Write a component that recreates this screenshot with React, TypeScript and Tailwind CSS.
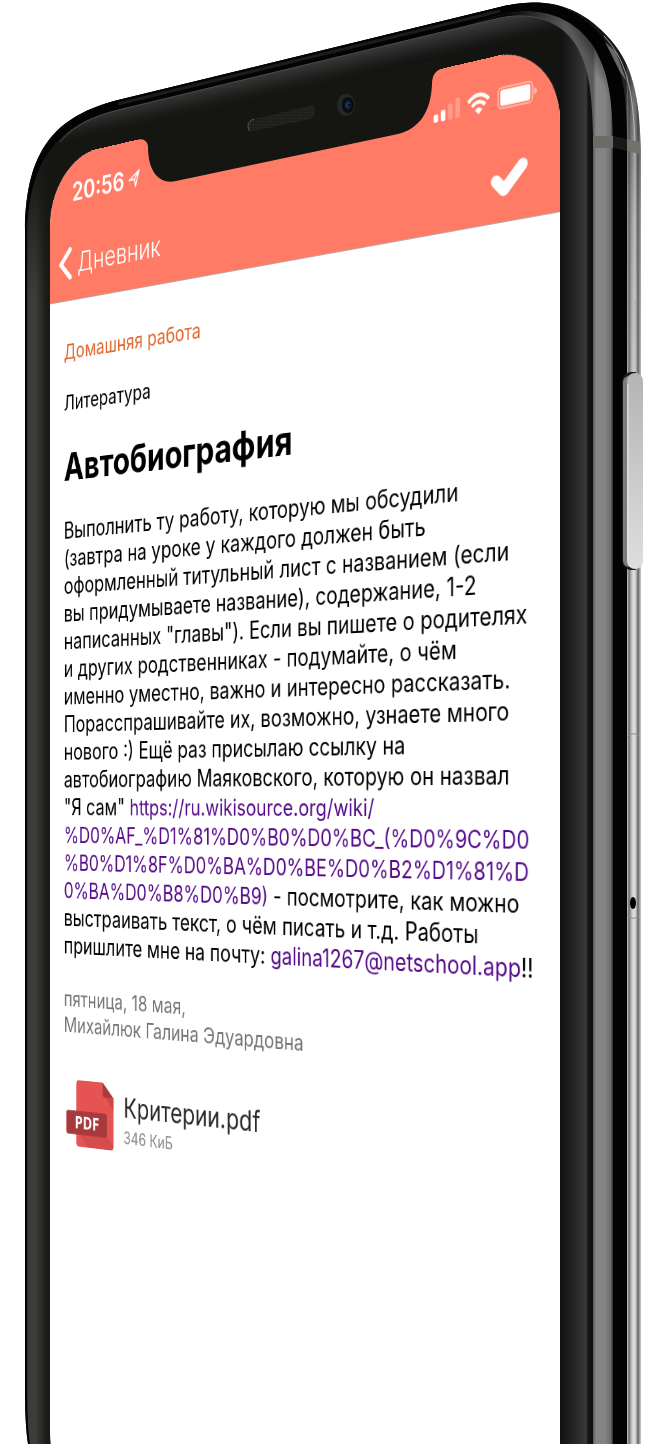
import React from "react";

const OUTER =
  "M28 1444 Q25 1425 25 1390 V230 C26 150 55 116 118 100 L500 7 C545 -4 575 6 600 29 C630 57 639 85 641 150 V1444 Z";
const SIDE =
  "M28 1444 Q25 1425 25 1390 V230 C26 150 55 116 118 100 L500 7 C545 -4 575 6 601 35 C620 62 626 80 627 135 V1444 Z";
const BEVEL = "M300 80 L500 15 C545 4 575 20 593 46 C608 72 612 95 613 140 V1444 H300 Z";
const GLASS =
  "M30 1444 Q27 1425 27 1390 V240 C28 160 58 124 118 110 L500 18 C535 11 560 22 574 42 C588 64 592 87 593 135 V1444 Z";

function PhoneBody() {
  return (
    <svg viewBox="0 0 668 1444" className="block w-full" aria-hidden="true">
      <defs>
        <linearGradient id="metal" gradientUnits="userSpaceOnUse" x1="626" y1="0" x2="641" y2="0">
          <stop offset="0" stopColor="#2a2a2a" />
          <stop offset="0.1" stopColor="#b4b4b4" />
          <stop offset="0.2" stopColor="#6a6a6a" />
          <stop offset="0.34" stopColor="#b4b4b4" />
          <stop offset="0.5" stopColor="#e0e0e0" />
          <stop offset="0.66" stopColor="#cccccc" />
          <stop offset="0.8" stopColor="#5e5e5e" />
          <stop offset="0.9" stopColor="#9e9e9e" />
          <stop offset="1" stopColor="#cfcfcf" />
        </linearGradient>
        <linearGradient id="metalShade" gradientUnits="userSpaceOnUse" x1="0" y1="20" x2="0" y2="520">
          <stop offset="0" stopColor="#111" stopOpacity="0.95" />
          <stop offset="0.15" stopColor="#222" stopOpacity="0.6" />
          <stop offset="0.4" stopColor="#555" stopOpacity="0.35" />
          <stop offset="1" stopColor="#888" stopOpacity="0" />
        </linearGradient>
        <linearGradient id="bevel" gradientUnits="userSpaceOnUse" x1="593" y1="0" x2="613" y2="0">
          <stop offset="0" stopColor="#5a5a5a" />
          <stop offset="0.15" stopColor="#858585" />
          <stop offset="0.6" stopColor="#838383" />
          <stop offset="0.88" stopColor="#6d6d6d" />
          <stop offset="1" stopColor="#2c2c2c" />
        </linearGradient>
        <linearGradient id="bevelTop" gradientUnits="userSpaceOnUse" x1="505" y1="20" x2="560" y2="40">
          <stop offset="0" stopColor="#050505" />
          <stop offset="1" stopColor="#050505" stopOpacity="0" />
        </linearGradient>
        <linearGradient id="bevelRim" gradientUnits="userSpaceOnUse" x1="575" y1="60" x2="612" y2="38">
          <stop offset="0.25" stopColor="#050505" stopOpacity="0" />
          <stop offset="0.8" stopColor="#050505" stopOpacity="0.8" />
        </linearGradient>
        <linearGradient id="glass" gradientUnits="userSpaceOnUse" x1="25" y1="0" x2="593" y2="0">
          <stop offset="0" stopColor="#111" />
          <stop offset="0.006" stopColor="#3b3c3a" />
          <stop offset="0.018" stopColor="#3e3f3d" />
          <stop offset="0.036" stopColor="#1d1e1b" />
          <stop offset="0.05" stopColor="#151612" />
          <stop offset="0.945" stopColor="#131412" />
          <stop offset="0.965" stopColor="#222322" />
          <stop offset="0.988" stopColor="#393939" />
          <stop offset="0.991" stopColor="#161712" />
          <stop offset="1" stopColor="#0d0e0b" />
        </linearGradient>
        <linearGradient id="topFade" gradientUnits="userSpaceOnUse" x1="0" y1="110" x2="0" y2="300">
          <stop offset="0" stopColor="#151612" />
          <stop offset="0.4" stopColor="#151612" stopOpacity="0.8" />
          <stop offset="1" stopColor="#151612" stopOpacity="0" />
        </linearGradient>
        <linearGradient id="sheen" gradientUnits="userSpaceOnUse" x1="334" y1="58" x2="339" y2="80">
          <stop offset="0" stopColor="#3c3c3c" stopOpacity="0.9" />
          <stop offset="0.4" stopColor="#333" stopOpacity="0.6" />
          <stop offset="1" stopColor="#222" stopOpacity="0" />
        </linearGradient>
        <linearGradient id="key" x1="0" y1="0" x2="0" y2="1">
          <stop offset="0" stopColor="#b4b4b4" />
          <stop offset="0.5" stopColor="#c9c9ca" />
          <stop offset="1" stopColor="#dedede" />
        </linearGradient>
      </defs>

      <path d={OUTER} fill="url(#metal)" />
      <path d={OUTER} fill="url(#metalShade)" />
      <path d="M604 36 C624 58 634 84 635 150 V300" fill="none" stroke="#d0d0d0" strokeWidth="1" opacity="0.7" />
      <path d={SIDE} fill="#030303" />
      <path d="M605 42 L616 52 L627 82 L620 72 Z" fill="#8a8a8a" opacity="0.7" />
      <path d={BEVEL} fill="url(#bevel)" />
      <path d="M300 80 L500 15 C545 4 575 20 593 46 C602 62 607 78 610 100 L560 110 L300 100 Z" fill="url(#bevelRim)" />
      <path d="M300 80 L500 15 C545 4 575 20 593 46 L600 60 L560 110 L300 100 Z" fill="url(#bevelTop)" />
      <path d="M118 104 L500 11" stroke="#1c1c1f" strokeWidth="3" fill="none" />
      <path d={GLASS} fill="url(#glass)" />
      <path d="M27 300 V240 C28 160 58 124 118 110 L340 56 V300 Z" fill="url(#topFade)" />
      <path d={GLASS} fill="url(#sheen)" />
      <path d="M60 142 C75 124 95 116 118 110 L500 18 C535 11 560 22 574 42" fill="none" stroke="#4b4b4d" strokeWidth="1" />

      <path d="M593 136 H613 V148 H593 Z" fill="#6a6d66" />
      <path d="M613 136 L627 139 V151 L613 148 Z" fill="#191a18" />
      <path d="M627 139 L640 142 V154 L627 151 Z" fill="#70736c" />

      <path d="M622 381 Q623 374 630 372 H636 V570 H630 Q622 568 622 560 Z" fill="#1a1a1a" />
      <rect x="623" y="376" width="14" height="191" rx="6" fill="#7c7c7c" />
      <rect x="627" y="373" width="16" height="196" rx="8" fill="url(#key)" />
      <path d="M628 384 V560" stroke="#ececec" strokeWidth="1" />

      <path d="M627 737 Q633 731 639 736" fill="none" stroke="#8e8e8e" strokeWidth="1" />
      <path d="M627 915 Q633 921 639 916" fill="none" stroke="#8e8e8e" strokeWidth="1" />
      <ellipse cx="633" cy="903" rx="3" ry="6" fill="#000" />
    </svg>
  );
}

function Notch() {
  return (
    <svg viewBox="0 0 668 200" className="pointer-events-none absolute inset-x-0 top-0 w-full" aria-hidden="true">
      <defs>
        <pattern id="mesh" width="3" height="3" patternUnits="userSpaceOnUse">
          <rect width="3" height="3" fill="#1e1e1d" />
          <circle cx="1.5" cy="1.5" r="0.8" fill="#2a2a29" />
        </pattern>
        <radialGradient id="lens">
          <stop offset="0" stopColor="#2c5a94" />
          <stop offset="0.5" stopColor="#16304f" />
          <stop offset="1" stopColor="#080a12" />
        </radialGradient>
      </defs>
      <path
        d="M136 140 Q147 137 148 147 C148 170 158 185 176 181 L398 134 C419 129 431 112 432 84 Q432 71 443 68 L443 58 L136 130 Z"
        fill="#151612"
      />
      <path
        d="M254 119 L309 106 Q315 105 315 111 Q315 117 310 119 L254 131 Q248 132 248 126 Q248 121 254 119 Z"
        fill="url(#mesh)"
      />
      <path d="M254 119 Q248 121 248 126 Q248 130 250 131" fill="none" stroke="#5a5a5a" strokeWidth="1" />
      <ellipse cx="346" cy="105" rx="9" ry="11" fill="#262727" />
      <ellipse cx="348" cy="105" rx="6" ry="8" fill="#0a0c14" />
      <ellipse cx="348" cy="105" rx="4" ry="5" fill="url(#lens)" />
      <circle cx="349" cy="105" r="1.5" fill="#0a0c14" />
    </svg>
  );
}

function StatusBar() {
  return (
    <div className="flex h-[84px] items-center pl-[35px] pr-[26px]">
      <span className="text-[28px] leading-8 font-semibold">20:56</span>
      <svg viewBox="0 0 16 18" className="ml-[6px] h-5 w-[18px]" aria-hidden="true">
        <path
          d="M1.4 9.8 L14.8 1.2 L9.8 16.8 L8.6 9.4 Z M14.8 1.2 L8.6 9.4"
          fill="none"
          stroke="#fff"
          strokeWidth="1.5"
          strokeLinejoin="round"
        />
      </svg>
      <div className="ml-auto flex items-center gap-2">
        <svg viewBox="0 0 29 18" className="h-5 w-8" aria-hidden="true" fill="#fff">
          <rect x="0" y="11" width="5" height="7" rx="1.5" />
          <rect x="8" y="8" width="5" height="10" rx="1.5" />
          <rect x="16" y="4" width="5" height="14" rx="1.5" opacity="0.25" />
          <rect x="24" y="0" width="5" height="18" rx="1.5" opacity="0.25" />
        </svg>
        <svg viewBox="0 0 26 19" className="h-[21px] w-[29px]" aria-hidden="true">
          <path d="M1.8 6.8 Q13 -3.4 24.2 6.8" fill="none" stroke="#fff" strokeWidth="3.4" />
          <path d="M5.9 11.2 Q13 4.6 20.1 11.2" fill="none" stroke="#fff" strokeWidth="3.2" />
          <path d="M9 14.6 Q13 11 17 14.6 L13 19 Z" fill="#fff" />
        </svg>
        <svg viewBox="0 0 42 20" className="h-[22px] w-[46px]" aria-hidden="true">
          <rect x="0.8" y="0.8" width="36.4" height="18.4" rx="4" fill="none" stroke="#fff" strokeWidth="1.4" opacity="0.5" />
          <rect x="3" y="3" width="32" height="14" rx="2" fill="#fff" />
          <path d="M39 7 Q42 8 42 10 Q42 12 39 13 Z" fill="#fff" opacity="0.5" />
        </svg>
      </div>
    </div>
  );
}

function NavBar() {
  return (
    <nav className="flex h-[74px] items-center justify-between pl-[13px] pr-9">
      <button type="button" className="flex items-center gap-2 text-[30px] leading-9 font-light">
        <svg viewBox="0 0 20 34" className="h-[38px] w-[22px]" aria-hidden="true">
          <path d="M17 3 L4 17 L17 31" fill="none" stroke="#fff" strokeWidth="5" strokeLinecap="round" strokeLinejoin="round" />
        </svg>
        Дневник
      </button>
      <button type="button" aria-label="Готово">
        <svg viewBox="0 0 41 31" className="block h-[34px] w-[45px]" aria-hidden="true">
          <path d="M6.5 16.5 L15 25 L35 5.5" fill="none" stroke="#fff" strokeWidth="11" strokeLinecap="round" strokeLinejoin="round" />
        </svg>
      </button>
    </nav>
  );
}

function PdfIcon() {
  return (
    <svg viewBox="0 0 67 67" className="h-[74px] w-[74px]" aria-hidden="true">
      <path d="M18 0 H51 L66 15 V63 Q66 67 62 67 H18 Q14 67 14 63 V4 Q14 0 18 0 Z" fill="#e55353" />
      <path d="M51 0 L66 15 H55 Q51 15 51 11 Z" fill="#a93c3f" />
      <path d="M55 15 H66 V27 Z" fill="#c94848" />
      <path d="M20 56 L57 54 L66 63 Q66 67 62 67 H31 Z" fill="#cf4a4a" opacity="0.7" />
      <rect x="0" y="31" width="57" height="24" rx="3" fill="#a83a3e" />
      <text x="29" y="49" textAnchor="middle" fontSize="18" fontWeight="700" fill="#fff" fontFamily="Open Sans, sans-serif">
        PDF
      </text>
    </svg>
  );
}

function Assignment() {
  return (
    <main className="px-[22px] pt-[42px] whitespace-nowrap text-black">
      <p className="text-[23px] leading-[31px] text-[#e0692f]">Домашняя работа</p>
      <p className="mt-[26px] text-[23px] leading-[31px]">Литература</p>
      <h1 className="mt-8 text-[42px] leading-[48px] font-bold">Автобиография</h1>
      <p className="mt-8 text-[25px] leading-[31px]">
        Выполнить ту работу, которую мы обсудили
        <br />
        (завтра на уроке у каждого должен быть
        <br />
        оформленный титульный лист с названием (если
        <br />
        вы придумываете название), содержание, 1-2
        <br />
        написанных "главы"). Если вы пишете о родителях
        <br />
        и других родственниках - подумайте, о чём
        <br />
        именно уместно, важно и интересно рассказать.
        <br />
        Порасспрашивайте их, возможно, узнаете много
        <br />
        нового :) Ещё раз присылаю ссылку на
        <br />
        автобиографию Маяковского, которую он назвал
        <br />
        "Я сам"{" "}
        <a
          className="text-[24px] text-[#550a8b]"
          href="https://ru.wikisource.org/wiki/%D0%AF_%D1%81%D0%B0%D0%BC_(%D0%9C%D0%B0%D1%8F%D0%BA%D0%BE%D0%B2%D1%81%D0%BA%D0%B8%D0%B9)"
        >
          https://ru.wikisource.org/wiki/
          <br />
          %D0%AF_%D1%81%D0%B0%D0%BC_(%D0%9C%D0
          <br />
          %B0%D1%8F%D0%BA%D0%BE%D0%B2%D1%81%D
          <br />
          0%BA%D0%B8%D0%B9)
        </a>{" "}
        - посмотрите, как можно
        <br />
        выстраивать текст, о чём писать и т.д. Работы
        <br />
        пришлите мне на почту:{" "}
        <a className="text-[#550a8b]" href="mailto:galina1267@netschool.app">
          galina1267@netschool.app
        </a>
        !!
      </p>
      <p className="mt-[30px] text-[23px] leading-[29px] text-[#757575]">
        пятница, 18 мая,
        <br />
        Михайлюк Галина Эдуардовна
      </p>
      <a href="#attachment" className="mt-[46px] ml-1 flex items-start gap-[14px]">
        <PdfIcon />
        <span className="flex flex-col gap-1 pt-[7px]">
          <span className="text-[30px] leading-[37px] text-[#2b2b2b]">Критерии.pdf</span>
          <span className="text-[18px] leading-[22px] text-[#8a8a8a]">346 КиБ</span>
        </span>
      </a>
    </main>
  );
}

export default function App() {
  return (
    <div className="flex min-h-screen justify-center overflow-hidden bg-white font-['Inter','Liberation_Sans',sans-serif]">
      <div className="relative w-[668px] shrink-0 self-start overflow-hidden">
        <PhoneBody />
        <div className="absolute top-0 left-0 h-[1511px] w-[686px] origin-top-left overflow-hidden rounded-[75px] bg-white [transform:matrix3d(0.61624,-0.18245,0,-0.00022635,0,0.88643,0,0,0,0,1,0,50,160,0,1)]">
          <header className="h-[163px] border-b border-[#b9a8a6] bg-[#ff7b66] text-white">
            <StatusBar />
            <NavBar />
          </header>
          <Assignment />
        </div>
        <Notch />
      </div>
    </div>
  );
}
